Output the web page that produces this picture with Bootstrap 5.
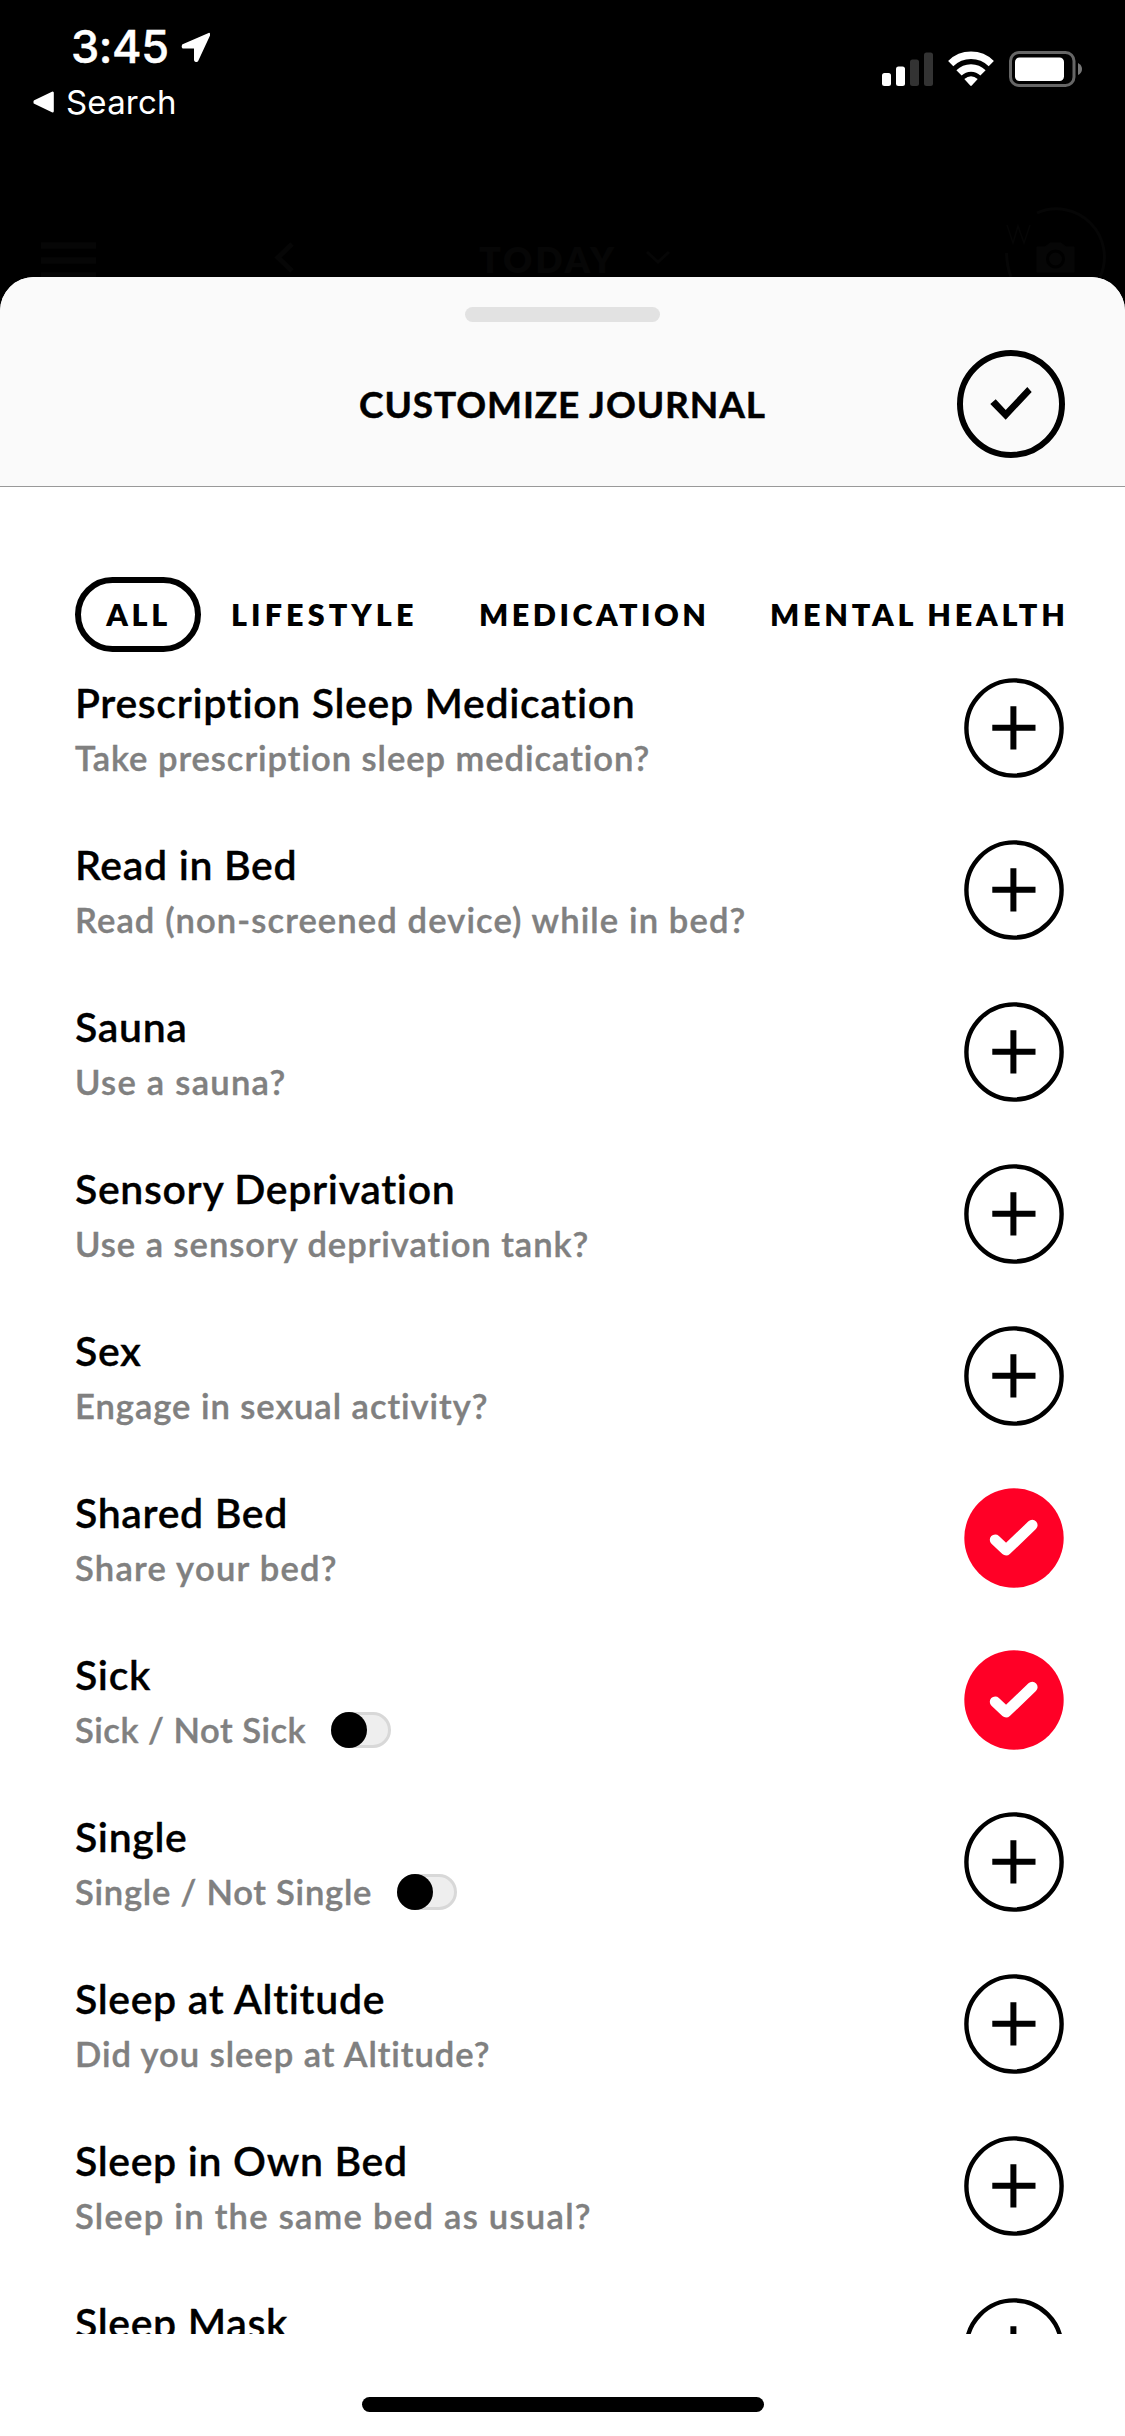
<!DOCTYPE html>
<html lang="en">
<head>
<meta charset="utf-8">
<meta name="viewport" content="width=device-width, initial-scale=1">
<title>Customize Journal</title>
<link href="https://cdn.jsdelivr.net/npm/bootstrap@5.3.0/dist/css/bootstrap.min.css" rel="stylesheet">
<style>
  body { font-family: Lato, "Open Sans", sans-serif; background: #000; color: #000; }
  svg { display: block; flex: none; }
  .screen { width: 1125px; height: 2436px; }
  .top-area { height: 277px; }
  .status-bar { font-family: Inter, "Liberation Sans", sans-serif; color: #fff; height: 130px; padding: 20px 42px 0 33px; }
  .clock { font-size: 45px; font-weight: 500; line-height: 54px; letter-spacing: -.4px; padding-left: 38px; -webkit-text-stroke: .5px #fff; }
  .clock svg { margin-left: 11px; }
  .back-link { font-size: 33px; line-height: 40px; margin-top: 8px; letter-spacing: .2px; }
  .back-link svg { margin-right: 11px; }
  .status-icons { margin-top: -1px; padding-top: 31px; }
  .dim-nav { height: 147px; padding: 0 19px 0 41px; color: #060606; }
  .dim-label { font-size: 36px; font-weight: 800; letter-spacing: 2.8px; line-height: 40px; margin-bottom: -2px; }
  .sheet { height: 2159px; border-radius: 34px 34px 0 0; }
  .sheet-head { height: 210px; background: #fafafa; border-bottom: 1px solid #999; padding-top: 30px; }
  .grabber { width: 195px; height: 15px; border-radius: 8px; background: #e2e2e2; }
  .head-grid { display: grid; grid-template-columns: 108px 1fr 108px; padding: 0 60px; margin-top: 28px; }
  .head-title { font-size: 37px; font-weight: 700; letter-spacing: .9px; line-height: 50px; -webkit-text-stroke: .5px #000; }
  .tabs { margin-top: 90px; height: 75px; padding-left: 75px; font-size: 30.5px; font-weight: 800; letter-spacing: 3.65px; white-space: nowrap; }
  .tab-pill { width: 126px; height: 75px; border: 6px solid #000; border-radius: 38px; padding-left: 1px; }
  .tab-a { margin-left: 30px; width: 248px; letter-spacing: 4.1px; }
  .tab-b { width: 291px; letter-spacing: 3.5px; }
  .tab-c { letter-spacing: 3.8px; }
  .journal { height: 1682px; padding: 0 61px 0 75px; }
  .entry { height: 162px; padding-top: 26px; }
  .entry-name { font-size: 41px; font-weight: 600; line-height: 48px; letter-spacing: .65px; padding-top: 1px; -webkit-text-stroke: .3px #000; }
  .entry-ask { font-size: 34.6px; font-weight: 600; line-height: 40px; margin-top: 11px; letter-spacing: .95px; color: #808080; -webkit-text-stroke: .4px #808080; }
  .loose { letter-spacing: 1.1px; }
  .looser { letter-spacing: 1.25px; }
  .pair { letter-spacing: .5px; gap: 25px; }
  .pair.wide { letter-spacing: .75px; }
  .toggle { width: 60px; height: 36px; border: 3px solid #d8d8d8; border-radius: 18px; background: #eee; }
  .toggle i { display: block; width: 36px; height: 36px; margin: -3px; border-radius: 50%; background: #000; }
  .home-bar { width: 402px; height: 15px; border-radius: 8px; background: #000; margin-top: 63px; }
</style>
</head>
<body>
<svg width="0" height="0" class="position-absolute" aria-hidden="true">
  <symbol id="plus" viewBox="0 0 100 100"><g fill="none" stroke="#000"><circle cx="50" cy="50" r="47.6" stroke-width="4.4"/><path d="M28.3 49.8H71.5M49.4 28.3V71.5" stroke-width="6"/></g></symbol>
  <symbol id="done" viewBox="0 0 100 100"><circle cx="50" cy="50" r="49.7" fill="#ff0026"/><path d="M31.2 51.8 42.1 62.2 68.2 37.2" fill="none" stroke="#fff" stroke-width="10.8" stroke-linecap="round" stroke-linejoin="round"/></symbol>
</svg>
<div class="screen overflow-hidden">
  <div class="top-area">
    <div class="status-bar d-flex justify-content-between align-items-start">
      <div>
        <div class="clock d-flex align-items-center">3:45
          <svg width="31" height="31" viewBox="0 0 31 31"><path d="M29 1.8 3 13.2Q2 15.6 4 15.6H15V28Q15.6 30 17.4 28.4L29 3.4Z" fill="#fff" stroke="#fff" stroke-width="2" stroke-linejoin="round"/></svg>
        </div>
        <div class="back-link d-flex align-items-center">
          <svg width="22" height="22" viewBox="0 0 22 22"><path d="M19.5 1.8V20.2L1.8 11.7V10.3Z" fill="#fff" stroke="#fff" stroke-width="2.6" stroke-linejoin="round"/></svg>Search
        </div>
      </div>
      <svg class="status-icons" width="202" height="68" viewBox="0 -1 202 37">
        <g fill="#fff"><rect x="1" y="22" width="9" height="13" rx="2.5"/><rect x="15" y="15.5" width="9" height="19.5" rx="2.5"/></g>
        <g fill="#333"><rect x="29" y="8.5" width="9" height="26.5" rx="2.5"/><rect x="43" y="1.5" width="9" height="33.5" rx="2.5"/></g>
        <g fill="none" stroke="#fff" stroke-width="7.4"><path d="M69.7 12.6A29 29 0 0 1 110.3 12.6"/><path d="M78 21.9A17 17 0 0 1 102 21.9"/></g>
        <path d="M83.3 28Q90 22.5 96.700 28L90.800 34.600Q90 35.400 89.200 34.600Z" fill="#fff"/>
        <rect x="129.500" y="1.500" width="63.500" height="33" rx="8.500" fill="none" stroke="#666" stroke-width="3"/>
        <rect x="134" y="6.500" width="49" height="23.500" rx="4.500" fill="#fff"/>
        <path d="M197 12Q201 14 201 18T197 24Z" fill="#777"/>
      </svg>
    </div>
    <div class="dim-nav d-flex align-items-end">
      <svg width="438" height="54" viewBox="0 0 438 54" fill="none" stroke="currentColor"><path d="M0 22.500H55M0 37.500H55M0 52.500H55" stroke-width="6.500"/><path d="M251 21 237 34.500 251 48" stroke-width="5"/></svg>
      <div class="dim-label">TODAY</div>
      <svg class="ms-4" width="34" height="54" viewBox="0 0 34 54"><path d="M6 29 17 39 28 29" fill="none" stroke="currentColor" stroke-width="3"/></svg>
      <svg class="ms-auto" width="101" height="70" viewBox="0 0 101 70" fill="none" stroke="currentColor"><path d="M32 6A48 48 0 0 1 95 70M1.500 46Q2 60 6 70" stroke-width="3"/><path d="M2 18 8 36 13 19 19 36 25 18" stroke-width="1.500"/><path d="M32 40H40L45 36H56L61 40H69V65H32Z" fill="currentColor"/><circle cx="50.500" cy="52" r="8" stroke="#000" stroke-width="3"/></svg>
    </div>
  </div>
  <main class="sheet bg-white overflow-hidden">
    <header class="sheet-head">
      <div class="grabber mx-auto"></div>
      <div class="head-grid align-items-center">
        <span></span>
        <div class="head-title text-center">CUSTOMIZE JOURNAL</div>
        <svg width="108" height="108" viewBox="0 0 108 108"><circle cx="54" cy="54" r="51" fill="none" stroke="#000" stroke-width="6"/><path d="M33.300 54 38.700 49.300 48.700 60 70.300 37 74.700 42 48.700 69.700Z"/></svg>
      </div>
    </header>
    <nav class="tabs d-flex align-items-center">
      <div class="tab-pill d-flex align-items-center justify-content-center">ALL</div>
      <div class="tab-a">LIFESTYLE</div>
      <div class="tab-b">MEDICATION</div>
      <div class="tab-c">MENTAL HEALTH</div>
    </nav>
    <section class="journal overflow-hidden">
      <div class="entry d-flex justify-content-between"><div><div class="entry-name">Prescription Sleep Medication</div><div class="entry-ask">Take prescription sleep medication?</div></div><svg width="100" height="100"><use href="#plus"/></svg></div>
      <div class="entry d-flex justify-content-between"><div><div class="entry-name">Read in Bed</div><div class="entry-ask loose">Read (non-screened device) while in bed?</div></div><svg width="100" height="100"><use href="#plus"/></svg></div>
      <div class="entry d-flex justify-content-between"><div><div class="entry-name">Sauna</div><div class="entry-ask looser">Use a sauna?</div></div><svg width="100" height="100"><use href="#plus"/></svg></div>
      <div class="entry d-flex justify-content-between"><div><div class="entry-name">Sensory Deprivation</div><div class="entry-ask">Use a sensory deprivation tank?</div></div><svg width="100" height="100"><use href="#plus"/></svg></div>
      <div class="entry d-flex justify-content-between"><div><div class="entry-name">Sex</div><div class="entry-ask">Engage in sexual activity?</div></div><svg width="100" height="100"><use href="#plus"/></svg></div>
      <div class="entry d-flex justify-content-between"><div><div class="entry-name">Shared Bed</div><div class="entry-ask looser">Share your bed?</div></div><svg width="100" height="100"><use href="#done"/></svg></div>
      <div class="entry d-flex justify-content-between"><div><div class="entry-name">Sick</div><div class="entry-ask pair d-flex align-items-center">Sick / Not Sick<span class="toggle"><i></i></span></div></div><svg width="100" height="100"><use href="#done"/></svg></div>
      <div class="entry d-flex justify-content-between"><div><div class="entry-name">Single</div><div class="entry-ask pair wide d-flex align-items-center">Single / Not Single<span class="toggle"><i></i></span></div></div><svg width="100" height="100"><use href="#plus"/></svg></div>
      <div class="entry d-flex justify-content-between"><div><div class="entry-name">Sleep at Altitude</div><div class="entry-ask">Did you sleep at Altitude?</div></div><svg width="100" height="100"><use href="#plus"/></svg></div>
      <div class="entry d-flex justify-content-between"><div><div class="entry-name">Sleep in Own Bed</div><div class="entry-ask looser">Sleep in the same bed as usual?</div></div><svg width="100" height="100"><use href="#plus"/></svg></div>
      <div class="entry d-flex justify-content-between"><div><div class="entry-name">Sleep Mask</div></div><svg width="100" height="100"><use href="#plus"/></svg></div>
    </section>
    <div class="home-bar mx-auto"></div>
  </main>
</div>
<script src="https://cdn.jsdelivr.net/npm/bootstrap@5.3.0/dist/js/bootstrap.bundle.min.js"></script>
</body>
</html>
